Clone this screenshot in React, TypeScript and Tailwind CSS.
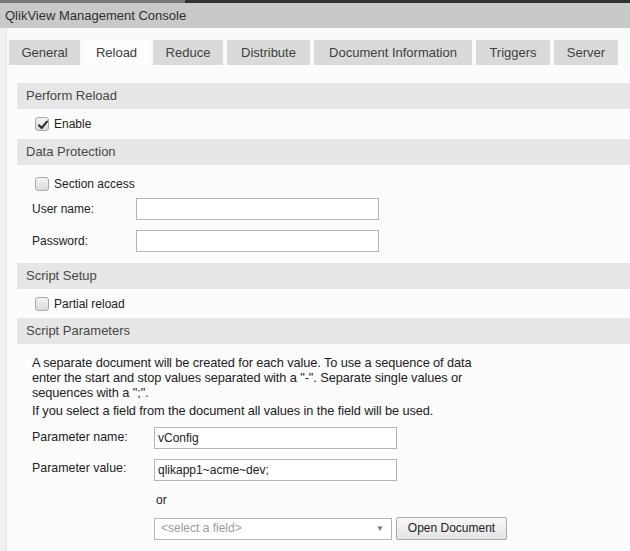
import React from 'react';

const tabs = [
  { label: 'General', w: 'w-[71px]' },
  { label: 'Reload', w: 'w-[65px]', active: true },
  { label: 'Reduce', w: 'w-[70px]' },
  { label: 'Distribute', w: 'w-[83px]' },
  { label: 'Document Information', w: 'w-[158px]' },
  { label: 'Triggers', w: 'w-[74px]' },
  { label: 'Server', w: 'w-[64px]' },
];

function SectionHeader({ title }: { title: string }) {
  return (
    <div className="h-[26px] flex items-center pl-[9px] bg-[#e5e6e5] text-[13px] text-[#464846]">
      {title}
    </div>
  );
}

function Checkbox({ checked, label }: { checked?: boolean; label: string }) {
  return (
    <label className="flex items-center pl-[18px]">
      <span className="relative w-[14px] h-[14px] rounded-[3px] border border-[#a8aaa8] bg-gradient-to-b from-[#f4f4f4] to-[#d9dad9]">
        {checked && (
          <svg viewBox="0 0 14 14" className="absolute inset-0 w-[14px] h-[14px]">
            <path d="M3 7.2 L5.6 10 L11 3.6" fill="none" stroke="#2a2a2a" strokeWidth="2" strokeLinecap="round" strokeLinejoin="round" />
          </svg>
        )}
      </span>
      <span className="ml-[5px] text-[12px] text-[#222]">{label}</span>
    </label>
  );
}

function TextInput({ value, w }: { value?: string; w: string }) {
  return (
    <div className={`${w} h-[22px] border border-[#b4b6b4] bg-white flex items-center px-[3px] text-[12px] text-[#222]`}>
      {value}
    </div>
  );
}

export default function App() {
  return (
    <div className="w-[630px] h-[551px] overflow-hidden bg-[#f9fbf9] font-['Liberation_Sans',Arial,sans-serif] flex flex-col">
      {/* top window strip */}
      <div className="h-[3px] flex">
        <div className="w-[185px] bg-[#777a77]" />
        <div className="flex-1 bg-[#303230]" />
      </div>

      {/* title bar */}
      <div className="h-[25px] bg-[#c7cac7] flex items-center pl-[5px] text-[13px] text-[#2e302e]">
        QlikView Management Console
      </div>

      <div className="flex-1 flex">
        <div className="w-[7px] bg-[#eff1ef] border-r border-[#e6e8e6]" />
        <div className="flex-1 flex flex-col">
          {/* tabs */}
          <div className="flex gap-[4px] pt-[12px] pl-[2px]">
            {tabs.map((t) => (
              <div
                key={t.label}
                className={`${t.w} h-[25px] flex items-center justify-center text-[13px] ${
                  t.active ? 'bg-[#fcfdfc] text-[#3a3c3a]' : 'bg-[#d9dad9] text-[#404240]'
                }`}
              >
                {t.label}
              </div>
            ))}
          </div>

          {/* panel */}
          <div className="flex-1 bg-[#fbfcfb] pl-[10px] pt-[18px]">
            <SectionHeader title="Perform Reload" />
            <div className="h-[30px] flex items-center">
              <Checkbox checked label="Enable" />
            </div>

            <SectionHeader title="Data Protection" />
            <div className="h-[28px] pt-[10px]">
              <Checkbox label="Section access" />
            </div>
            <div className="h-[32px] flex items-center pl-[15px]">
              <span className="w-[104px] text-[12px] text-[#222]">User name:</span>
              <TextInput w="w-[243px]" />
            </div>
            <div className="h-[32px] flex items-center pl-[15px]">
              <span className="w-[104px] text-[12px] text-[#222]">Password:</span>
              <TextInput w="w-[243px]" />
            </div>

            <div className="mt-[6px]">
              <SectionHeader title="Script Setup" />
            </div>
            <div className="h-[29px] flex items-center">
              <Checkbox label="Partial reload" />
            </div>

            <SectionHeader title="Script Parameters" />
            <div className="pl-[15px] pt-[11px] text-[12px] leading-[15px] text-[#222]">
              <div className="text-[12.8px] tracking-[-0.1px]">
                <p>
                  A separate document will be created for each value. To use a sequence of data
                  <br />
                  enter the start and stop values separated with a "-". Separate single values or
                  <br />
                  sequences with a ";".
                </p>
                <p className="mt-[3px]">If you select a field from the document all values in the field will be used.</p>
              </div>

              <div className="mt-[9px] flex items-center">
                <span className="w-[122px] pb-[1px] text-[12.4px]">Parameter name:</span>
                <TextInput w="w-[243px]" value="vConfig" />
              </div>
              <div className="mt-[10px] flex items-center">
                <span className="w-[122px] pb-[4px] text-[12.4px]">Parameter value:</span>
                <TextInput w="w-[243px]" value="qlikapp1~acme~dev;" />
              </div>
              <div className="mt-[12px] pl-[124px] text-[12px]">or</div>
              <div className="mt-[9px] pl-[122px] flex items-center gap-[4px]">
                <div className="w-[238px] h-[22px] border border-[#b4b6b4] bg-white flex items-center justify-between pl-[6px] pr-[7px]">
                  <span className="text-[#9a9c9a]">&lt;select a field&gt;</span>
                  <span className="text-[8px] text-[#777]">▼</span>
                </div>
                <button className="w-[111px] h-[23px] border border-[#a9aba9] rounded-[2px] bg-gradient-to-b from-[#f7f7f7] to-[#e3e4e3] text-[12px] text-[#222]">
                  Open Document
                </button>
              </div>
            </div>
          </div>
        </div>
      </div>
    </div>
  );
}
